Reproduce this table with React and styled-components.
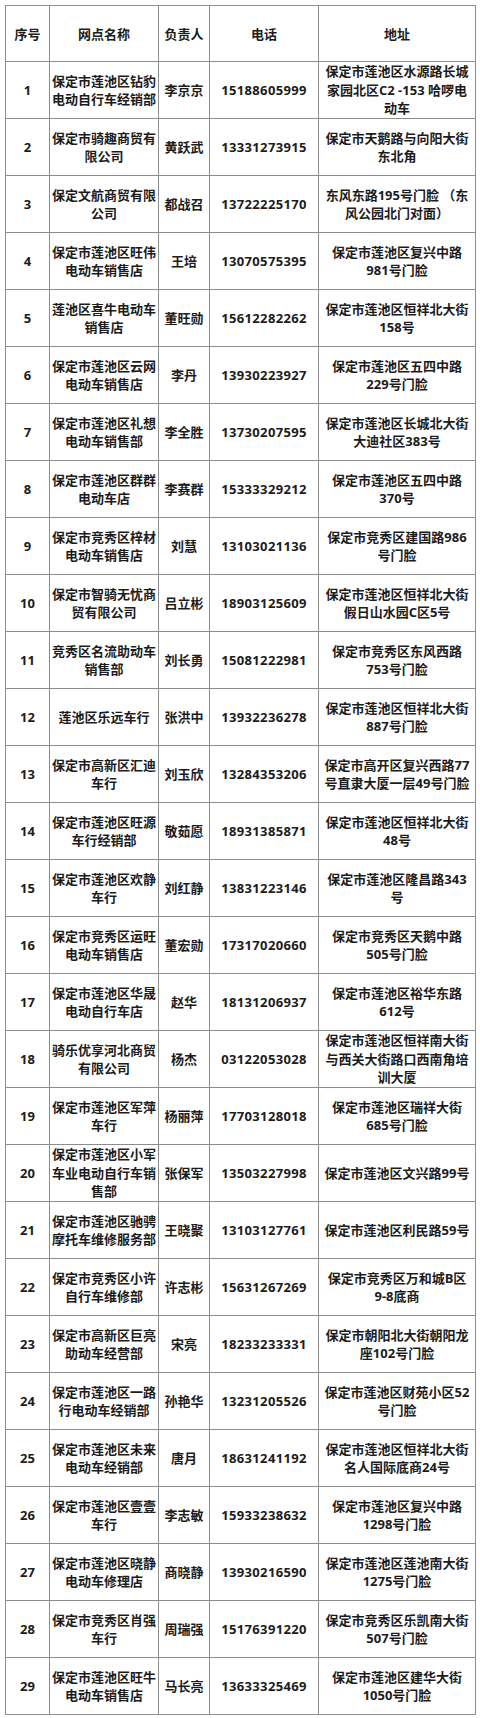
import React from "react";
import styled, { createGlobalStyle } from "styled-components";

const rows = [
  ["1", "保定市莲池区钻豹电动自行车经销部", "李京京", "15188605999", "保定市莲池区水源路长城家园北区C2 -153 哈啰电动车"],
  ["2", "保定市骑趣商贸有限公司", "黄跃武", "13331273915", "保定市天鹅路与向阳大街东北角"],
  ["3", "保定文航商贸有限公司", "都战召", "13722225170", "东风东路195号门脸 （东风公园北门对面）"],
  ["4", "保定市莲池区旺伟电动车销售店", "王培", "13070575395", "保定市莲池区复兴中路981号门脸"],
  ["5", "莲池区喜牛电动车销售店", "董旺勋", "15612282262", "保定市莲池区恒祥北大街158号"],
  ["6", "保定市莲池区云网电动车销售店", "李丹", "13930223927", "保定市莲池区五四中路229号门脸"],
  ["7", "保定市莲池区礼想电动车销售部", "李全胜", "13730207595", "保定市莲池区长城北大街大迪社区383号"],
  ["8", "保定市莲池区群群电动车店", "李赛群", "15333329212", "保定市莲池区五四中路370号"],
  ["9", "保定市竞秀区梓材电动车销售店", "刘慧", "13103021136", "保定市竞秀区建国路986号门脸"],
  ["10", "保定市智骑无忧商贸有限公司", "吕立彬", "18903125609", "保定市莲池区恒祥北大街假日山水园C区5号"],
  ["11", "竞秀区名流助动车销售部", "刘长勇", "15081222981", "保定市竞秀区东风西路753号门脸"],
  ["12", "莲池区乐远车行", "张洪中", "13932236278", "保定市莲池区恒祥北大街887号门脸"],
  ["13", "保定市高新区汇迪车行", "刘玉欣", "13284353206", "保定市高开区复兴西路77号直隶大厦一层49号门脸"],
  ["14", "保定市莲池区旺源车行经销部", "敬茹愿", "18931385871", "保定市莲池区恒祥北大街48号"],
  ["15", "保定市莲池区欢静车行", "刘红静", "13831223146", "保定市莲池区隆昌路343号"],
  ["16", "保定市竞秀区运旺电动车销售店", "董宏勋", "17317020660", "保定市竞秀区天鹅中路505号门脸"],
  ["17", "保定市莲池区华晟电动自行车店", "赵华", "18131206937", "保定市莲池区裕华东路612号"],
  ["18", "骑乐优享河北商贸有限公司", "杨杰", "03122053028", "保定市莲池区恒祥南大街与西关大街路口西南角培训大厦"],
  ["19", "保定市莲池区军萍车行", "杨丽萍", "17703128018", "保定市莲池区瑞祥大街685号门脸"],
  ["20", "保定市莲池区小军车业电动自行车销售部", "张保军", "13503227998", "保定市莲池区文兴路99号"],
  ["21", "保定市莲池区驰骋摩托车维修服务部", "王晓聚", "13103127761", "保定市莲池区利民路59号"],
  ["22", "保定市竞秀区小许自行车维修部", "许志彬", "15631267269", "保定市竞秀区万和城B区9-8底商"],
  ["23", "保定市高新区巨亮助动车经营部", "宋亮", "18233233331", "保定市朝阳北大街朝阳龙座102号门脸"],
  ["24", "保定市莲池区一路行电动车经销部", "孙艳华", "13231205526", "保定市莲池区财苑小区52号门脸"],
  ["25", "保定市莲池区未来电动车经销部", "唐月", "18631241192", "保定市莲池区恒祥北大街名人国际底商24号"],
  ["26", "保定市莲池区壹壹车行", "李志敏", "15933238632", "保定市莲池区复兴中路1298号门脸"],
  ["27", "保定市莲池区晓静电动车修理店", "商晓静", "13930216590", "保定市莲池区莲池南大街1275号门脸"],
  ["28", "保定市竞秀区肖强车行", "周瑞强", "15176391220", "保定市竞秀区乐凯南大街507号门脸"],
  ["29", "保定市莲池区旺牛电动车销售店", "马长亮", "13633325469", "保定市莲池区建华大街1050号门脸"],
];

const headers = ["序号", "网点名称", "负责人", "电话", "地址"];
const widths = [44, 109, 51, 109, 157];

const GlobalStyle = createGlobalStyle`
  html, body {
    margin: 0;
    background: #ffffff;
  }
  body {
    padding: 5px;
    font-family: "Open Sans", "Noto Sans CJK SC", sans-serif;
  }
`;

const Table = styled.table`
  border-collapse: collapse;
  table-layout: fixed;
  width: 470px;
  color: #1c1c1c;
  font-size: 13px;
  font-weight: 700;
`;

const HeadCell = styled.th`
  height: 55px;
  border: 1px solid #8c8c8c;
  padding: 0 2px;
  text-align: center;
  vertical-align: middle;
  font-weight: 700;
  font-size: 13px;
`;

const Cell = styled.td`
  height: 56px;
  border: 1px solid #8c8c8c;
  padding: 0 ${(p) => (p.$wide ? 3 : 2)}px;
  text-align: center;
  vertical-align: middle;
  line-height: 18.5px;
  letter-spacing: ${(p) => (p.$phone ? "0.35px" : "0")};
`;

export default function App() {
  return (
    <>
      <GlobalStyle />
      <Table>
        <colgroup>
          {widths.map((w, i) => (
            <col key={i} style={{ width: w }} />
          ))}
        </colgroup>
        <thead>
          <tr>
            {headers.map((h) => (
              <HeadCell key={h}>{h}</HeadCell>
            ))}
          </tr>
        </thead>
        <tbody>
          {rows.map((r) => (
            <tr key={r[0]}>
              <Cell>{r[0]}</Cell>
              <Cell>{r[1]}</Cell>
              <Cell>{r[2]}</Cell>
              <Cell $phone>{r[3]}</Cell>
              <Cell $wide>{r[4]}</Cell>
            </tr>
          ))}
        </tbody>
      </Table>
    </>
  );
}
